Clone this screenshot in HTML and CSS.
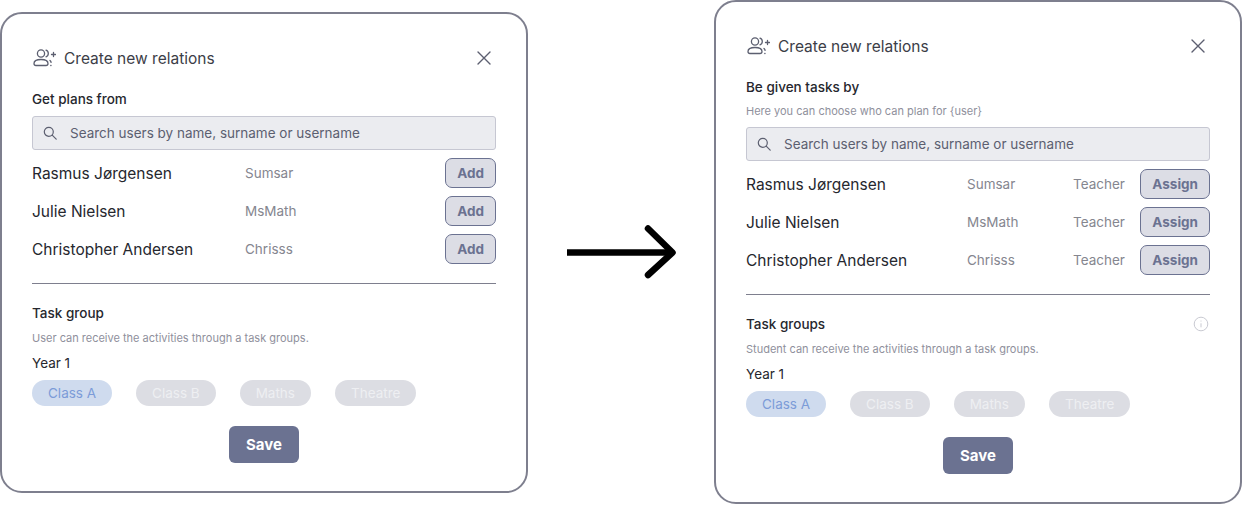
FILE: index.html
```html
<!DOCTYPE html>
<html lang="en">

<head>
    <title>Create new relations</title>
    <link rel="stylesheet" href="styles.css">
</head>

<body>
    <!-- Before -->
    <section class="card card-before">
        <header class="card-header">
            <svg class="icon-users" viewBox="0 0 24 20" width="24" height="20" fill="none" stroke="#5c5f70" stroke-width="1.3" stroke-linecap="round">
                <circle cx="9" cy="5.5" r="3.6"/>
                <path d="M2 15.5c0-2.6 3-4 7-4s7 1.400 7 4c0 1.300-.8 2-2 2H4c-1.200 0-2-.7-2-2z"/>
                <path d="M14 2.200c1.500.5 2.300 1.800 2.300 3.300s-.8 2.800-2.300 3.300"/>
                <path d="M18 12.500c.6.500 1 1 1.100 1.800M18.800 17.500h.2"/>
                <path d="M19.500 6.500h4M21.500 4.500v4"/>
            </svg>
            <h1 class="card-title">Create new relations</h1>
            <svg class="icon-close" viewBox="0 0 14 14" width="14" height="14" fill="none" stroke="#5c5f70" stroke-width="1.400" stroke-linecap="round"><path d="M1 1l12 12M13 1L1 13"/></svg>
        </header>

        <h2 class="label label-first">Get plans from</h2>
        <div class="search">
            <svg viewBox="0 0 14 14" width="14" height="14" fill="none" stroke="#5c5f70" stroke-width="1.200" stroke-linecap="round"><circle cx="5.800" cy="5.800" r="4.500"/><path d="M9.200 9.200l4 4"/></svg>
            <span>Search users by name, surname or username</span>
        </div>
        <ul class="users">
            <li class="user"><span class="user-name">Rasmus Jørgensen</span><span class="user-nick">Sumsar</span><button class="btn-add">Add</button></li>
            <li class="user"><span class="user-name">Julie Nielsen</span><span class="user-nick">MsMath</span><button class="btn-add">Add</button></li>
            <li class="user"><span class="user-name">Christopher Andersen</span><span class="user-nick">Chrisss</span><button class="btn-add">Add</button></li>
        </ul>
        <hr class="divider">

        <h2 class="label">Task group</h2>
        <p class="hint hint-group">User can receive the activities through a task groups.</p>
        <h3 class="year">Year 1</h3>
        <div class="chips">
            <span class="chip chip-active">Class A</span>
            <span class="chip">Class B</span>
            <span class="chip">Maths</span>
            <span class="chip">Theatre</span>
        </div>
        <button class="btn-save">Save</button>
    </section>

    <!-- Arrow between the two versions -->
    <svg class="arrow" viewBox="0 0 114 54" width="114" height="54" fill="none" stroke="#000" stroke-width="6.500" stroke-linecap="round" stroke-linejoin="round">
        <path d="M3 27.500h106" stroke-linecap="butt"/>
        <path d="M84 3.500l24.500 24L84 50"/>
    </svg>

    <!-- After -->
    <section class="card card-after">
        <header class="card-header">
            <svg class="icon-users" viewBox="0 0 24 20" width="24" height="20" fill="none" stroke="#5c5f70" stroke-width="1.3" stroke-linecap="round">
                <circle cx="9" cy="5.500" r="3.600"/>
                <path d="M2 15.500c0-2.600 3-4 7-4s7 1.400 7 4c0 1.300-.8 2-2 2H4c-1.200 0-2-.7-2-2z"/>
                <path d="M14 2.200c1.500.5 2.300 1.800 2.300 3.300s-.8 2.800-2.300 3.300"/>
                <path d="M18 12.500c.6.500 1 1 1.100 1.800M18.800 17.500h.2"/>
                <path d="M19.500 6.500h4M21.500 4.500v4"/>
            </svg>
            <h1 class="card-title">Create new relations</h1>
            <svg class="icon-close" viewBox="0 0 14 14" width="14" height="14" fill="none" stroke="#5c5f70" stroke-width="1.400" stroke-linecap="round"><path d="M1 1l12 12M13 1L1 13"/></svg>
        </header>

        <h2 class="label label-first">Be given tasks by</h2>
        <p class="hint hint-search">Here you can choose who can plan for {user}</p>
        <div class="search">
            <svg viewBox="0 0 14 14" width="14" height="14" fill="none" stroke="#5c5f70" stroke-width="1.200" stroke-linecap="round"><circle cx="5.800" cy="5.800" r="4.500"/><path d="M9.200 9.200l4 4"/></svg>
            <span>Search users by name, surname or username</span>
        </div>
        <ul class="users users-roles">
            <li class="user"><span class="user-name">Rasmus Jørgensen</span><span class="user-nick">Sumsar</span><span class="user-nick">Teacher</span><button class="btn-add">Assign</button></li>
            <li class="user"><span class="user-name">Julie Nielsen</span><span class="user-nick">MsMath</span><span class="user-nick">Teacher</span><button class="btn-add">Assign</button></li>
            <li class="user"><span class="user-name">Christopher Andersen</span><span class="user-nick">Chrisss</span><span class="user-nick">Teacher</span><button class="btn-add">Assign</button></li>
        </ul>
        <hr class="divider">

        <div class="label-row">
            <h2 class="label">Task groups</h2>
            <svg class="icon-info" viewBox="0 0 16 16" width="16" height="16" fill="none" stroke="#c9cad2" stroke-width="1"><circle cx="8" cy="8" r="6.800"/><path d="M8 7.300v4M8 4.600v.9"/></svg>
        </div>
        <p class="hint hint-group">Student can receive the activities through a task groups.</p>
        <h3 class="year">Year 1</h3>
        <div class="chips">
            <span class="chip chip-active">Class A</span>
            <span class="chip">Class B</span>
            <span class="chip">Maths</span>
            <span class="chip">Theatre</span>
        </div>
        <button class="btn-save">Save</button>
    </section>
</body>

</html>
```

FILE: styles.css
```css
/* Resetting default margins and padding */
* {
    margin: 0;
    padding: 0;
    box-sizing: border-box;
}

body {
    width: 1242px;
    height: 505px;
    overflow: hidden;
    display: flex;
    justify-content: space-between;
    align-items: flex-start;
    font-family: 'Inter', sans-serif;
    background-color: #ffffff;
    color: #26272e;
}

/* Cards */
.card {
    width: 528px;
    display: flex;
    flex-direction: column;
    padding: 0 30px;
    background-color: #ffffff;
    border: 2px solid #7e7f8e;
    border-radius: 22px;
}

.card-before {
    height: 481px;
    margin-top: 12px;
    padding-top: 30px;
}

.card-after {
    height: 504px;
    padding-top: 30px;
}

.card-header {
    display: flex;
    align-items: center;
    height: 28px;
}

.icon-users {
    margin-right: 8px;
}

.card-title {
    flex: 1;
    font-size: 15.500px;
    font-weight: 400;
    color: #3c3d47;
}

.icon-close {
    margin-right: 5px;
}

/* Text */
.label {
    font-size: 13.500px;
    font-weight: 500;
    line-height: 18px;
    color: #26272e;
}

.label-first {
    margin-top: 18px;
}

.label-row {
    display: flex;
    justify-content: space-between;
    align-items: center;
    padding-right: 1px;
}

.hint {
    font-size: 11px;
    line-height: 16px;
    color: #8f909c;
}

.hint-search {
    margin-top: 7px;
}

.hint-group {
    margin-top: 8px;
}

.year {
    margin-top: 9px;
    font-size: 13.500px;
    font-weight: 400;
    line-height: 16px;
    color: #26272e;
}

/* Search box */
.search {
    display: flex;
    align-items: center;
    gap: 13px;
    height: 34px;
    margin-top: 8px;
    padding-left: 10px;
    font-size: 13.500px;
    color: #5c5f70;
    background-color: #ebecf0;
    border: 1px solid #c6c7d2;
    border-radius: 3px;
}

/* User rows */
.users {
    list-style-type: none;
    display: flex;
    flex-direction: column;
    gap: 8px;
    margin-top: 8px;
}

.user {
    display: grid;
    grid-template-columns: 213px 1fr auto;
    align-items: center;
    height: 30px;
}

.users-roles .user {
    grid-template-columns: 221px 106px 1fr auto;
}

.user-name {
    font-size: 15.500px;
    color: #26272e;
}

.user-nick {
    font-size: 13.500px;
    color: #85868f;
}

.btn-add {
    grid-column: -2;
    height: 30px;
    padding: 0 11px;
    font-family: inherit;
    font-size: 13.500px;
    font-weight: 700;
    color: #6b7291;
    background-color: #dcdde5;
    border: 1px solid #6b7291;
    border-radius: 7px;
}

.divider {
    margin: 19px 0 20px;
    border: none;
    border-top: 1px solid #7e7f8e;
}

/* Task group chips */
.chips {
    display: flex;
    gap: 24px;
    margin-top: 9px;
}

.chip {
    height: 26px;
    padding: 0 16px;
    font-size: 13.500px;
    line-height: 26px;
    color: #eeeff2;
    background-color: #dcdde3;
    border-radius: 13px;
}

.chip-active {
    color: #7c9bd8;
    background-color: #cfdbee;
}

.btn-save {
    align-self: center;
    width: 70px;
    height: 37px;
    margin-top: 20px;
    font-family: inherit;
    font-size: 15px;
    font-weight: 700;
    color: #ffffff;
    background-color: #6b7291;
    border: none;
    border-radius: 6px;
}

.arrow {
    align-self: flex-start;
    margin-top: 225px;
}
```
